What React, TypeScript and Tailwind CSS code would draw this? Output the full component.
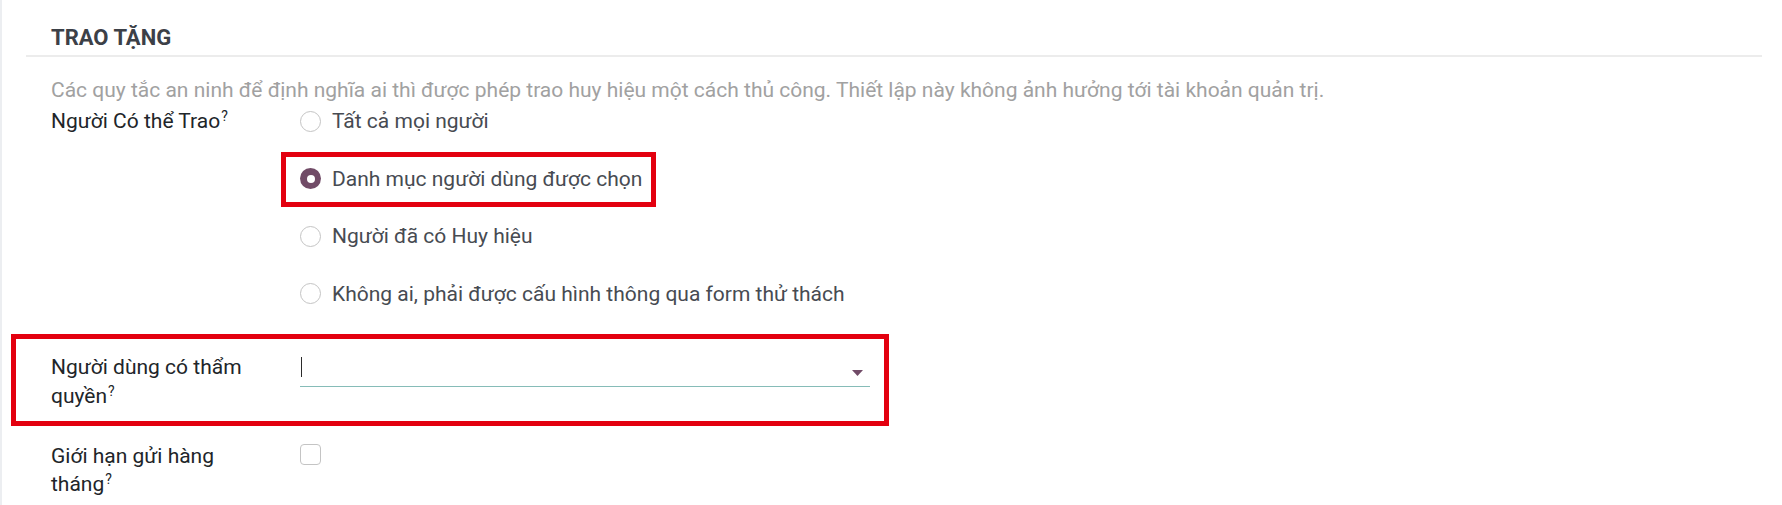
import React from "react";

const options = [
  "Tất cả mọi người",
  "Danh mục người dùng được chọn",
  "Người đã có Huy hiệu",
  "Không ai, phải được cấu hình thông qua form thử thách",
];

function Sup() {
  return <sup className="ml-px text-[14px] font-normal leading-none">?</sup>;
}

function Radio({ checked }: { checked?: boolean }) {
  return checked ? (
    <span className="flex h-[21px] w-[21px] shrink-0 items-center justify-center rounded-full bg-[#714b67]">
      <span className="h-[8px] w-[8px] rounded-full bg-white" />
    </span>
  ) : (
    <span className="h-[21px] w-[21px] shrink-0 rounded-full border border-[#c4c4c4] bg-white" />
  );
}

export default function App() {
  const selected = 1;

  return (
    <div
      className="min-h-[505px] w-[1782px] border-l-2 border-[#eceef1] bg-white text-[21px] text-[#212529]"
      style={{ fontFamily: "Roboto, 'Noto Sans', sans-serif" }}
    >
      {/* section title */}
      <div className="ml-[24px] mr-[20px] border-b-2 border-[#ececec] pl-[25px] pt-[25px] pb-[4px]">
        <div className="text-[22px] font-bold leading-[26px] text-[#3c4047]">
          TRAO TẶNG
        </div>
      </div>

      <div className="pl-[49px]">
        <div className="mt-[19px] leading-[28px] text-[#a1a1a1]">
          Các quy tắc an ninh để định nghĩa ai thì được phép trao huy hiệu một cách thủ công. Thiết lập này không ảnh hưởng tới tài khoản quản trị.
        </div>

        {/* who can grant */}
        <div className="mt-[3px] flex">
          <div className="w-[249px] pr-[40px] leading-[28px]">
            Người Có thể Trao<Sup />
          </div>
          <div className="flex flex-col gap-[29.5px]">
            {options.map((o, i) => (
              <div key={o} className="relative flex h-[28px] w-fit items-center gap-[11px] text-[#474b52]">
                <Radio checked={i === selected} />
                <span className="leading-[28px]">{o}</span>
                {i === selected ? (
                  <span className="pointer-events-none absolute -left-[19px] -right-[14px] -top-[13px] -bottom-[14px] border-[5px] border-[#e3000f]" />
                ) : null}
              </div>
            ))}
          </div>
        </div>

        {/* authorized users */}
        <div className="relative mt-[45px] flex w-[819px]">
          <div className="w-[249px] pr-[40px] leading-[29px]">
            Người dùng có thẩm quyền<Sup />
          </div>
          <div className="flex h-[34px] w-[570px] items-start justify-between border-b border-[#86bcb8] pt-[4px]">
            <span className="ml-[1px] h-[20px] w-px bg-[#2b2b2b]" />
            <svg width="11" height="6" viewBox="0 0 11 6" className="mr-[7px] mt-[13px]">
              <path d="M0 0 L11 0 L5.5 6 Z" fill="#714b67" />
            </svg>
          </div>
          <span className="pointer-events-none absolute -left-[40px] -right-[19px] -top-[19px] -bottom-[15px] border-[5px] border-[#e3000f]" />
        </div>

        {/* monthly limit */}
        <div className="mt-[31px] flex">
          <div className="w-[249px] pr-[40px] leading-[28px]">
            Giới hạn gửi hàng tháng<Sup />
          </div>
          <div className="pt-[2px]">
            <span className="block h-[21px] w-[21px] rounded-[4px] border border-[#c4c4c4] bg-white" />
          </div>
        </div>
      </div>
    </div>
  );
}
